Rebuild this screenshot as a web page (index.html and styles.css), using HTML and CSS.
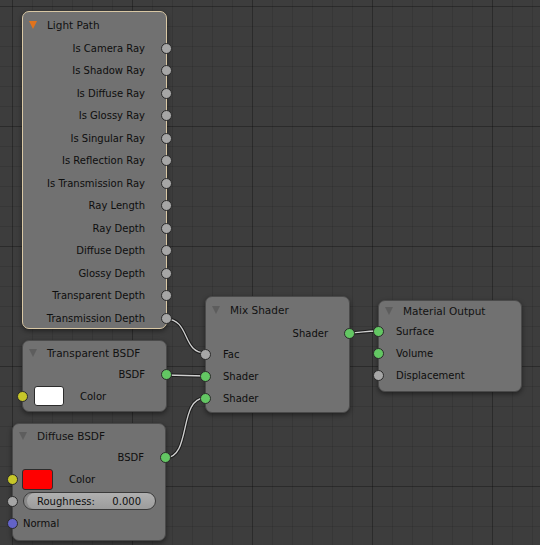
FILE: index.html
```html
<!DOCTYPE html>
<html>
<head>
<meta charset="utf-8">
<link rel="stylesheet" href="styles.css">
</head>
<body>
<div class="canvas">
  <svg class="links" width="540" height="545" viewBox="0 0 540 545">
    <g class="link-outer">
      <path d="M166 319 C 190 319, 182 353, 205 353"/>
      <path d="M166 375 L 205 376"/>
      <path d="M165 458 C 192 458, 178 398, 205 398"/>
      <path d="M348 333 C 362 333, 364 331, 377 331"/>
    </g>
    <g class="link-inner">
      <path d="M166 319 C 190 319, 182 353, 205 353"/>
      <path d="M166 375 L 205 376"/>
      <path d="M165 458 C 192 458, 178 398, 205 398"/>
      <path d="M348 333 C 362 333, 364 331, 377 331"/>
    </g>
  </svg>

  <div class="node node-lightpath selected">
    <div class="header hdr-26"><span class="tri tri-active"></span>Light Path</div>
    <div class="row out r225">Is Camera Ray<span class="sock grey right"></span></div>
    <div class="row out r225">Is Shadow Ray<span class="sock grey right"></span></div>
    <div class="row out r225">Is Diffuse Ray<span class="sock grey right"></span></div>
    <div class="row out r225">Is Glossy Ray<span class="sock grey right"></span></div>
    <div class="row out r225">Is Singular Ray<span class="sock grey right"></span></div>
    <div class="row out r225">Is Reflection Ray<span class="sock grey right"></span></div>
    <div class="row out r225">Is Transmission Ray<span class="sock grey right"></span></div>
    <div class="row out r225">Ray Length<span class="sock grey right"></span></div>
    <div class="row out r225">Ray Depth<span class="sock grey right"></span></div>
    <div class="row out r225">Diffuse Depth<span class="sock grey right"></span></div>
    <div class="row out r225">Glossy Depth<span class="sock grey right"></span></div>
    <div class="row out r225">Transparent Depth<span class="sock grey right"></span></div>
    <div class="row out r225">Transmission Depth<span class="sock grey right"></span></div>
  </div>

  <div class="node node-transparent">
    <div class="header hdr-24"><span class="tri"></span>Transparent BSDF</div>
    <div class="row out r215">BSDF<span class="sock green right"></span></div>
    <div class="row in r215 swatch-row-t"><span class="sock yellow left"></span><span class="swatch white"></span><span class="lbl-t">Color</span></div>
  </div>

  <div class="node node-diffuse">
    <div class="header hdr-24"><span class="tri"></span>Diffuse BSDF</div>
    <div class="row out r2175">BSDF<span class="sock green right"></span></div>
    <div class="row in r2175 swatch-row-d"><span class="sock yellow left"></span><span class="swatch red"></span><span class="lbl-d">Color</span></div>
    <div class="row in r2175 field-row"><span class="sock grey left"></span><div class="field"><span>Roughness:</span><span>0.000</span></div></div>
    <div class="row in r2175 normal-row"><span class="sock purple left"></span>Normal</div>
  </div>

  <div class="node node-mix">
    <div class="header hdr-26"><span class="tri"></span>Mix Shader</div>
    <div class="row out r22">Shader<span class="sock green right"></span></div>
    <div class="row in r2167">Fac<span class="sock grey left"></span></div>
    <div class="row in r2167">Shader<span class="sock green left"></span></div>
    <div class="row in r2167">Shader<span class="sock green left"></span></div>
  </div>

  <div class="node node-output">
    <div class="header hdr-20"><span class="tri"></span>Material Output</div>
    <div class="row in r22">Surface<span class="sock green left"></span></div>
    <div class="row in r22">Volume<span class="sock green left"></span></div>
    <div class="row in r22">Displacement<span class="sock grey left"></span></div>
  </div>
</div>
</body>
</html>
```

FILE: styles.css
```css
html, body {
  margin: 0;
  padding: 0;
  background: #3c3c3c;
}

.canvas {
  position: relative;
  width: 540px;
  height: 545px;
  overflow: hidden;
  background-color: #3d3d3d;
  background-image:
    linear-gradient(to right, rgba(0,0,0,0.22) 1px, transparent 1px),
    linear-gradient(to bottom, rgba(0,0,0,0.22) 1px, transparent 1px),
    linear-gradient(to right, rgba(0,0,0,0.10) 1px, transparent 1px),
    linear-gradient(to bottom, rgba(0,0,0,0.10) 1px, transparent 1px);
  background-size: 120px 120px, 120px 120px, 20px 20px, 20px 20px;
  background-position: 12px 6px, 12px 6px, 12px 6px, 12px 6px;
  font-family: "DejaVu Sans", "Liberation Sans", sans-serif;
  font-size: 10px;
  color: #0e0e0e;
}

.links {
  position: absolute;
  left: 0;
  top: 0;
  z-index: 0;
}

.link-outer path {
  fill: none;
  stroke: #1c1c1c;
  stroke-width: 3.4;
}

.link-inner path {
  fill: none;
  stroke: #d0d0d0;
  stroke-width: 1.3;
}

.node {
  position: absolute;
  z-index: 1;
  box-sizing: border-box;
  background: #717171;
  border: 1px solid #4a4a4a;
  border-radius: 7px;
  box-shadow: 0 2px 5px rgba(0,0,0,0.45);
  display: flex;
  flex-direction: column;
}

.node.selected {
  border-color: #d8c7a4;
}

.node-lightpath { left: 22px; top: 11px; width: 145px; height: 318px; }
.node-transparent { left: 22px; top: 340px; width: 145px; height: 72px; }
.node-diffuse { left: 12px; top: 423px; width: 154px; height: 118px; }
.node-mix { left: 205px; top: 296px; width: 145px; height: 117px; }
.node-output { left: 378px; top: 300px; width: 144px; height: 92px; }

.header {
  display: flex;
  align-items: center;
  flex-shrink: 0;
  padding-left: 5px;
  font-size: 10.5px;
  color: #111;
}

.hdr-26 { height: 25px; }
.hdr-24 { height: 23px; }
.hdr-20 { height: 19px; }

.tri {
  width: 0;
  height: 0;
  border-left: 4.5px solid transparent;
  border-right: 4.5px solid transparent;
  border-top: 8px solid #5d5d5d;
  margin-right: 10px;
  margin-left: 1px;
}

.tri-active {
  border-top-color: #e1731c;
}

.row {
  position: relative;
  display: flex;
  align-items: center;
  flex-shrink: 0;
  white-space: nowrap;
}

.r225 { height: 22.5px; }
.r215 { height: 21.5px; }
.r2175 { height: 21.75px; }
.r22 { height: 22px; }
.r2167 { height: 21.67px; }

.out {
  justify-content: flex-end;
  padding-right: 21px;
}

.in {
  padding-left: 17px;
}

.sock {
  position: absolute;
  top: 50%;
  width: 9px;
  height: 9px;
  margin-top: -5.5px;
  border-radius: 50%;
  border: 1px solid #2a2a2a;
}

.sock.right { right: -6px; }
.sock.left { left: -6px; }

.grey { background: #a6a6a6; }
.green { background: #63c763; }
.yellow { background: #c7c729; }
.purple { background: #6363c7; }

.swatch {
  box-sizing: border-box;
  border: 1px solid #2c2c2c;
  border-radius: 3px;
}

.swatch.white {
  width: 30px;
  height: 20px;
  background: #ffffff;
}

.swatch.red {
  width: 31px;
  height: 21px;
  background: #ff0000;
}

.swatch-row-t { padding-left: 11px; }
.lbl-t { margin-left: 16px; }

.swatch-row-d { padding-left: 9px; }
.lbl-d { margin-left: 16px; }

.field-row { padding-left: 10px; }

.field {
  box-sizing: border-box;
  width: 133px;
  height: 18px;
  border: 1px solid #3a3a3a;
  border-radius: 9px;
  background: linear-gradient(to bottom, #b0b0b0, #9c9c9c);
  display: flex;
  align-items: center;
  justify-content: space-between;
  padding: 0 14px 0 13px;
  box-shadow: inset 3px 0 0 #8a8a8a;
}

.normal-row { padding-left: 10px; }
```
